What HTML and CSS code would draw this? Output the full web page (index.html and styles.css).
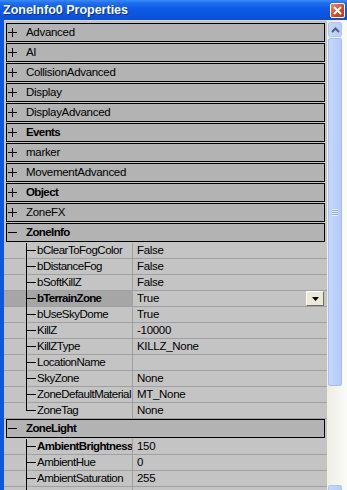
FILE: index.html
```html
<!DOCTYPE html>
<html lang="en">

<head>
    <meta charset="UTF-8">
    <title>ZoneInfo0 Properties</title>
    <link rel="stylesheet" href="styles.css">
</head>

<body>
    <div class="window">
        <div class="titlebar">
            <span class="title">ZoneInfo0 Properties</span>
            <span class="close">
                <svg width="9" height="9" viewBox="0 0 9 9"><path d="M1 1L8 8M8 1L1 8" stroke="#fff" stroke-width="2" /></svg>
            </span>
        </div>
        <div class="frame">
            <div class="grid">
                <div class="cat"><span class="sign plus"></span>Advanced</div>
                <div class="cat"><span class="sign plus"></span>AI</div>
                <div class="cat"><span class="sign plus"></span>CollisionAdvanced</div>
                <div class="cat"><span class="sign plus"></span>Display</div>
                <div class="cat"><span class="sign plus"></span>DisplayAdvanced</div>
                <div class="cat bold"><span class="sign plus"></span>Events</div>
                <div class="cat"><span class="sign plus"></span>marker</div>
                <div class="cat"><span class="sign plus"></span>MovementAdvanced</div>
                <div class="cat bold"><span class="sign plus"></span>Object</div>
                <div class="cat"><span class="sign plus"></span>ZoneFX</div>
                <div class="cat bold"><span class="sign"></span>ZoneInfo</div>

                <div class="prop"><span class="gutter"></span><span class="tree"></span><span class="name">bClearToFogColor</span><span class="value">False</span></div>
                <div class="prop"><span class="gutter"></span><span class="tree"></span><span class="name">bDistanceFog</span><span class="value">False</span></div>
                <div class="prop"><span class="gutter"></span><span class="tree"></span><span class="name">bSoftKillZ</span><span class="value">False</span></div>
                <div class="prop selected"><span class="gutter"></span><span class="tree"></span><span class="name">bTerrainZone</span><span class="value">True<span class="drop"><svg width="7" height="4" viewBox="0 0 7 4"><path d="M0 0H7L3.5 4Z" fill="#000" /></svg></span></span></div>
                <div class="prop"><span class="gutter"></span><span class="tree"></span><span class="name">bUseSkyDome</span><span class="value">True</span></div>
                <div class="prop"><span class="gutter"></span><span class="tree"></span><span class="name">KillZ</span><span class="value">-10000</span></div>
                <div class="prop"><span class="gutter"></span><span class="tree"></span><span class="name">KillZType</span><span class="value">KILLZ_None</span></div>
                <div class="prop"><span class="gutter"></span><span class="tree"></span><span class="name">LocationName</span><span class="value"></span></div>
                <div class="prop"><span class="gutter"></span><span class="tree"></span><span class="name">SkyZone</span><span class="value">None</span></div>
                <div class="prop"><span class="gutter"></span><span class="tree"></span><span class="name">ZoneDefaultMaterial</span><span class="value">MT_None</span></div>
                <div class="prop last"><span class="gutter"></span><span class="tree"></span><span class="name">ZoneTag</span><span class="value">None</span></div>

                <div class="cat bold"><span class="sign"></span>ZoneLight</div>

                <div class="prop"><span class="gutter"></span><span class="tree"></span><span class="name bold">AmbientBrightness</span><span class="value">150</span></div>
                <div class="prop"><span class="gutter"></span><span class="tree"></span><span class="name">AmbientHue</span><span class="value">0</span></div>
                <div class="prop"><span class="gutter"></span><span class="tree"></span><span class="name">AmbientSaturation</span><span class="value">255</span></div>
                <div class="prop"><span class="gutter"></span><span class="tree"></span><span class="name">DistanceFogBlend</span><span class="value">1</span></div>
            </div>
            <div class="scrollbar">
                <div class="sbtn">
                    <svg width="9" height="6" viewBox="0 0 9 6"><path d="M1 5L4.5 1.5L8 5" stroke="#4d6185" stroke-width="2" fill="none" /></svg>
                </div>
                <div class="thumb"><span class="grip"></span></div>
                <div class="sbtn"></div>
            </div>
        </div>
    </div>
</body>

</html>
```

FILE: styles.css
```css
body,
div,
span {
    margin: 0;
    padding: 0;
}

body {
    background: #fff;
    font: 11px/16px "Liberation Sans", Arial, sans-serif;
}

.window {
    width: 347px;
    height: 490px;
    overflow: hidden;
    display: flex;
    flex-direction: column;
}

.titlebar {
    height: 20px;
    flex: none;
    display: flex;
    align-items: center;
    justify-content: space-between;
    padding: 0 2px 0 3px;
    background: linear-gradient(#3b8cf5 0%, #1f6ef0 15%, #0d5ae4 45%, #0a55df 75%, #0850d6 100%);
}

.title {
    color: #fff;
    font: bold 12.5px/20px "Liberation Sans", Arial, sans-serif;
    text-shadow: 1px 1px 0 #0a2f8c;
}

.close {
    width: 15px;
    height: 15px;
    box-sizing: border-box;
    border: 1px solid #fff;
    border-radius: 2px;
    background: linear-gradient(135deg, #f08a6c, #d6451f 60%, #c23a14);
    display: flex;
    align-items: center;
    justify-content: center;
}

.frame {
    flex: 1;
    display: flex;
    border-left: 4px solid #0b57df;
    min-height: 0;
}

.grid {
    flex: 1;
    background: #c4c4c4;
    padding-top: 2px;
    border-top: 1px solid #d8d6cc;
    overflow: hidden;
}

.cat {
    height: 19px;
    box-sizing: border-box;
    margin: 0 2px 1px;
    padding-bottom: 1px;
    border: 1px solid #000;
    background: #b3b3b3;
    display: flex;
    align-items: center;
    color: #000;
    font-size: 11.5px;
    letter-spacing: -0.3px;
}

.bold {
    font-weight: bold;
    letter-spacing: -0.6px;
}

.sign {
    position: relative;
    width: 9px;
    height: 9px;
    margin: 0 9px 0 1px;
    flex: none;
}

.sign::before {
    content: "";
    position: absolute;
    left: 0;
    top: 4px;
    width: 9px;
    height: 1px;
    background: #000;
}

.sign.plus::after {
    content: "";
    position: absolute;
    left: 4px;
    top: 0;
    width: 1px;
    height: 9px;
    background: #000;
}

.prop {
    height: 16px;
    box-sizing: border-box;
    border-bottom: 1px solid #a0a0a0;
    display: flex;
    font-size: 11.5px;
    line-height: 15px;
    letter-spacing: -0.5px;
}

.gutter {
    width: 18px;
    flex: none;
}

.tree {
    position: relative;
    width: 14px;
    flex: none;
}

.tree::before {
    content: "";
    position: absolute;
    left: 4px;
    top: 0;
    bottom: -1px;
    width: 1px;
    background: #000;
}

.last .tree::before {
    bottom: 7px;
}

.tree::after {
    content: "";
    position: absolute;
    left: 4px;
    top: 7px;
    width: 10px;
    height: 1px;
    background: #000;
}

.name {
    width: 96px;
    flex: none;
    overflow: hidden;
    white-space: nowrap;
    padding-left: 1px;
    box-sizing: border-box;
}

.selected .gutter,
.selected .tree,
.selected .name {
    background: #a6a6a6;
}

.selected .name {
    font-weight: bold;
    letter-spacing: -0.7px;
}

.value {
    flex: 1;
    border-left: 1px solid #a0a0a0;
    padding-left: 4px;
    display: flex;
    align-items: center;
    justify-content: space-between;
    white-space: nowrap;
    letter-spacing: -0.3px;
}

.drop {
    width: 18px;
    height: 15px;
    box-sizing: border-box;
    margin-right: 3px;
    border: 1px solid;
    border-color: #fff #716f64 #716f64 #fff;
    background: #ece9d8;
    display: flex;
    align-items: center;
    justify-content: center;
}

.scrollbar {
    width: 20px;
    flex: none;
    background: linear-gradient(90deg, #eeede5, #fbfbf8);
    display: flex;
    flex-direction: column;
    gap: 1px;
    padding: 2px 5px 0 1px;
    box-sizing: border-box;
}

.sbtn {
    height: 15px;
    flex: none;
    box-sizing: border-box;
    border: 1px solid #b3c6f0;
    border-radius: 2px;
    background: linear-gradient(90deg, #c6d6fc, #b9cdfa);
    display: flex;
    align-items: center;
    justify-content: center;
}

.thumb {
    height: 348px;
    flex: none;
    box-sizing: border-box;
    border: 1px solid #a8bdf0;
    border-radius: 2px;
    background: linear-gradient(90deg, #c8d8fd, #bcd0fb 50%, #b5cafa);
    margin-bottom: 98px;
    display: flex;
    align-items: center;
    justify-content: center;
}

.grip {
    width: 6px;
    height: 7px;
    background: repeating-linear-gradient(#eef3ff 0, #eef3ff 1px, #8ea8e3 1px, #8ea8e3 2px);
}
```
